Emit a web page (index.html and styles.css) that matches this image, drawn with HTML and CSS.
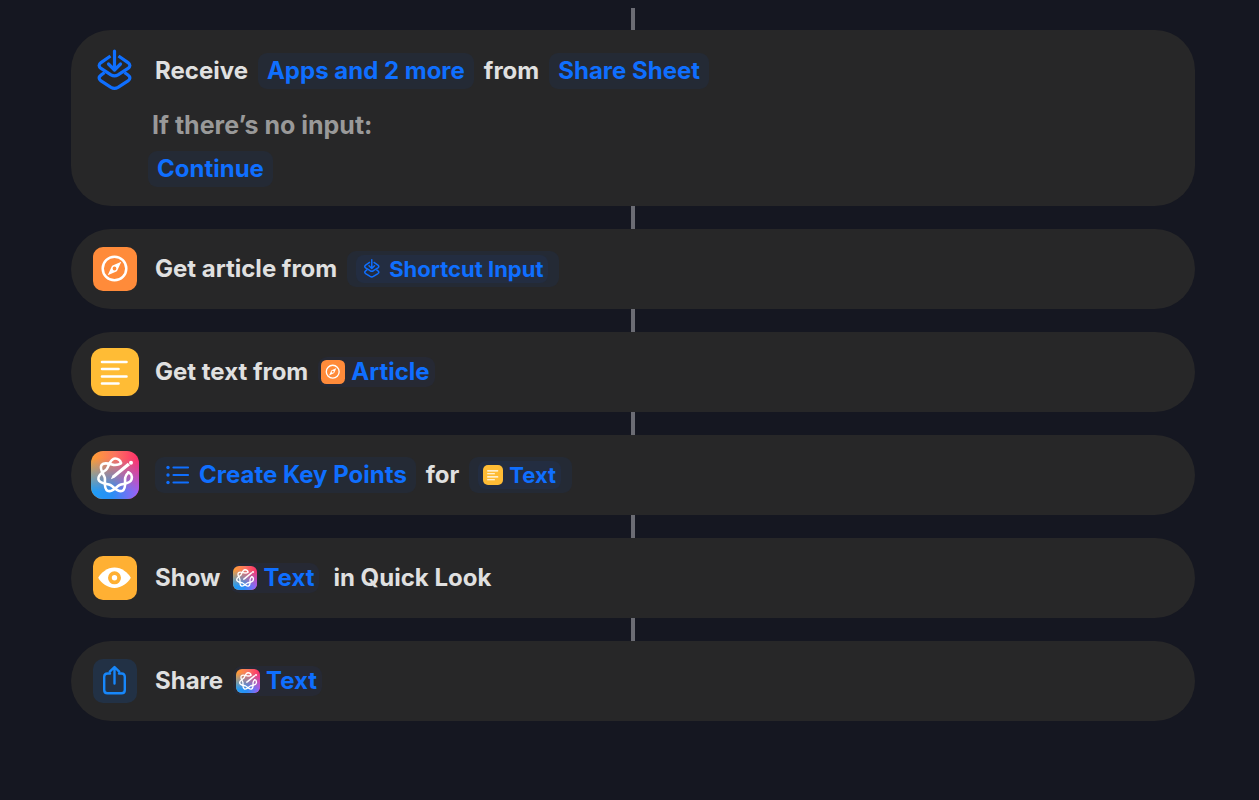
FILE: index.html
```
<!DOCTYPE html>
<html lang="en">
    <head>
        <title>Shortcut</title>
        <meta charset="UTF-8">
        <meta name="viewport" content="width=device-width, initial-scale=1">
        <link rel="stylesheet" href="styles.css">
    </head>
    <body>
        <!-- icons used more than once -->
        <svg class="defs" width="0" height="0" aria-hidden="true">
            <defs>
                <linearGradient id="warm" x1="0" y1="0" x2="1" y2="0">
                    <stop offset="0" stop-color="#ffa033"/>
                    <stop offset="0.5" stop-color="#fa7560"/>
                    <stop offset="1" stop-color="#ff2d6b"/>
                </linearGradient>
                <linearGradient id="cool" x1="0" y1="0" x2="1" y2="0">
                    <stop offset="0" stop-color="#1f9df5"/>
                    <stop offset="0.45" stop-color="#2b8ef5"/>
                    <stop offset="1" stop-color="#a060f5"/>
                </linearGradient>
                <linearGradient id="fade" x1="0" y1="0" x2="0" y2="1">
                    <stop offset="0.15" stop-color="#000"/>
                    <stop offset="0.85" stop-color="#fff"/>
                </linearGradient>
                <mask id="lower"><rect width="48" height="48" fill="url(#fade)"/></mask>
            </defs>
            <symbol id="input" viewBox="0 0 48 48">
                <g fill="none" stroke="currentColor" stroke-width="3.200" stroke-linecap="round" stroke-linejoin="round">
                    <path d="M23.500 4V22.500M17.500 17l6 6 6-6"/>
                    <path stroke-linecap="butt" d="M19.500 9L10 15.600Q6.200 18.500 10 21.400L20 27.800Q23.500 29.800 27 27.800L37 21.400Q40.800 18.500 37 15.600L27.500 9"/>
                    <path stroke-linecap="butt" d="M13.500 25.500L10 28.100Q6.200 31 10 33.900L20 40.300Q23.500 42.300 27 40.300L37 33.900Q40.800 31 37 28.100L33.500 25.500"/>
                </g>
            </symbol>
            <symbol id="safari" viewBox="0 0 44 44">
                <rect width="44" height="44" rx="10" fill="#ff8b3a"/>
                <circle cx="21.500" cy="21.500" r="11.800" fill="none" stroke="#fff" stroke-width="2.500"/>
                <path fill="#fff" fill-rule="evenodd" d="M28.300 14.700L24.300 23.500Q24 24.100 23.400 24.400L14.700 28.300L18.700 19.500Q19 18.900 19.600 18.600ZM21.500 19.600a1.900 1.900 0 1 0 0 3.800a1.900 1.900 0 1 0 0-3.800Z"/>
            </symbol>
            <symbol id="text" viewBox="0 0 48 48">
                <rect width="48" height="48" rx="12" fill="#ffbc35"/>
                <path d="M11 14h24.500M11 21h16.500M11 28.500h24.500M11 35.500h16.500" stroke="#fff" stroke-width="2.600" stroke-linecap="round"/>
            </symbol>
            <symbol id="writing" viewBox="0 0 48 48">
                <rect width="48" height="48" rx="12" fill="url(#warm)"/>
                <rect width="48" height="48" rx="12" fill="url(#cool)" mask="url(#lower)"/>
                <g fill="none" stroke="#fff" stroke-width="2.600" stroke-linecap="round">
                    <path d="M37.400 21.400Q35 23.400 34.200 26.800C33.400 30.200 35.900 37.600 31.400 39.800C26.900 42 22.600 35.500 19.400 34C16.200 32.500 8.500 33.200 7.400 28.300C6.300 23.400 13.600 20.700 15.800 18C18 15.300 19 7.500 24 7.500C27 7.500 29.500 9.500 30 12.100"/>
                    <path d="M37.400 21.400C39.500 22 41.500 24.500 40.600 28.300C39.500 33.200 31.800 32.500 28.600 34C25.400 35.500 21.100 42 16.600 39.800C12.100 37.600 14.600 30.200 13.800 26.800C13 23.400 7.600 17.800 10.700 13.900C13.800 10 20.500 14 24 14C26.500 14 29 13.500 30 12.100"/>
                </g>
                <path fill="#fff" d="M36.800 11.800L39 14.200L23.500 26.800L19.800 28.300L21.500 24.600Z"/>
                <circle cx="40" cy="11.800" r="2" fill="#fff"/>
            </symbol>
        </svg>

        <ol class="flow">
            <li class="action">
                <div class="row">
                    <span class="icon"><svg class="icon-48 blue" aria-hidden="true"><use href="#input"/></svg></span>
                    <span>Receive</span>
                    <button type="button" class="token">Apps and 2 more</button>
                    <span>from</span>
                    <button type="button" class="token">Share Sheet</button>
                </div>
                <div class="fallback">
                    <span class="hint" id="noinput">If there’s no input:</span>
                    <button type="button" class="token" aria-describedby="noinput">Continue</button>
                </div>
            </li>
            <li class="action">
                <div class="row">
                    <span class="icon"><svg class="icon-44" aria-hidden="true"><use href="#safari"/></svg></span>
                    <span>Get article from</span>
                    <button type="button" class="token nested">
                        <span class="variable"><svg class="icon-22" aria-hidden="true"><use href="#input"/></svg>Shortcut Input</span>
                    </button>
                </div>
            </li>
            <li class="action">
                <div class="row">
                    <span class="icon"><svg class="icon-48" aria-hidden="true"><use href="#text"/></svg></span>
                    <span>Get text from</span>
                    <button type="button" class="token inline"><svg class="icon-24" aria-hidden="true"><use href="#safari"/></svg>Article</button>
                </div>
            </li>
            <li class="action">
                <div class="row">
                    <span class="icon"><svg class="icon-48" aria-hidden="true"><use href="#writing"/></svg></span>
                    <button type="button" class="token list">
                        <svg class="icon-24" viewBox="0 0 24 24" aria-hidden="true">
                            <g fill="currentColor"><circle cx="2" cy="4.500" r="1.700"/><circle cx="2" cy="12" r="1.700"/><circle cx="2" cy="19.500" r="1.700"/></g>
                            <path d="M7.500 4.500H22M7.500 12H22M7.500 19.500H22" stroke="currentColor" stroke-width="2.200" stroke-linecap="round"/>
                        </svg>Create Key Points</button>
                    <span>for</span>
                    <button type="button" class="token nested">
                        <span class="variable"><svg class="icon-20" aria-hidden="true"><use href="#text"/></svg>Text</span>
                    </button>
                </div>
            </li>
            <li class="action">
                <div class="row">
                    <span class="icon">
                        <svg class="icon-44" viewBox="0 0 44 44" aria-hidden="true">
                            <rect width="44" height="44" rx="10" fill="#ffb033"/>
                            <path fill="#fff" d="M5.200 21.800C8 16.500 14.500 11.500 21.500 11.500S35 16.500 37.800 21.800C35 27.100 28.500 32 21.500 32S8 27.100 5.200 21.800Z"/>
                            <circle cx="21.500" cy="21.800" r="4.600" fill="none" stroke="#ffb033" stroke-width="3.800"/>
                        </svg>
                    </span>
                    <span>Show</span>
                    <button type="button" class="token inline"><svg class="icon-24" aria-hidden="true"><use href="#writing"/></svg>Text</button>
                    <span class="after">in Quick Look</span>
                </div>
            </li>
            <li class="action">
                <div class="row">
                    <span class="icon">
                        <svg class="icon-44" viewBox="0 0 44 44" aria-hidden="true">
                            <rect width="44" height="44" rx="10" fill="#223145"/>
                            <g fill="none" stroke="#1787fb" stroke-width="2.400" stroke-linecap="round" stroke-linejoin="round">
                                <path d="M17 14.500H14.500Q11.200 14.500 11.200 17.800V31Q11.200 34.300 14.500 34.300H28.500Q31.800 34.300 31.800 31V17.800Q31.800 14.500 28.500 14.500H26"/>
                                <path d="M21.500 24.500V8.500M16.800 12.700L21.500 8L26.200 12.700"/>
                            </g>
                        </svg>
                    </span>
                    <span>Share</span>
                    <button type="button" class="token inline"><svg class="icon-24" aria-hidden="true"><use href="#writing"/></svg>Text</button>
                </div>
            </li>
        </ol>
    </body>
</html>
```
FILE: styles.css
```
body{
    margin: 0;
    background: #151721;
    color: #e0e0e0;
    font-family: Inter, "Liberation Sans", sans-serif;
    font-size: 24px;
    font-weight: 700;
    line-height: 36px;
}
.defs{
    position: absolute;
}
.flow{
    list-style: none;
    margin: 0;
    padding: 8px 64px 64px 71px;
}
/* the line that joins an action to the one above */
.action::before{
    content: "";
    display: block;
    width: 4px;
    height: 23px;
    margin: 0 auto;
    background: #6b6c74;
}
.action:first-child::before{
    height: 22px;
}
.row{
    display: flex;
    flex-wrap: wrap;
    align-items: center;
    gap: 10px;
    padding: 16px 20px;
    background: #272728;
    border-radius: 40px;
}
.action:first-child .row{
    border-radius: 40px 40px 0 0;
    padding: 17px 20px 12px;
}
.fallback{
    display: flex;
    flex-direction: column;
    align-items: flex-start;
    gap: 8px;
    padding: 0 20px 19px 77px;
    background: #272728;
    border-radius: 0 0 40px 40px;
}
.hint{
    padding-left: 4px;
    color: #999;
    font-size: 25px;
}
.icon{
    display: flex;
    align-items: center;
    justify-content: center;
    width: 48px;
    height: 48px;
    margin-right: 6px;
}
svg{
    flex: none;
}
.icon-48{
    width: 48px;
    height: 48px;
}
.icon-44{
    width: 44px;
    height: 44px;
}
.icon-24{
    width: 24px;
    height: 24px;
}
.icon-22{
    width: 22px;
    height: 22px;
}
.icon-20{
    width: 20px;
    height: 20px;
}
.blue, .token{
    color: #0f6fff;
}
.token{
    display: flex;
    align-items: center;
    height: 36px;
    margin: 0;
    padding: 0 9px;
    border: 0;
    border-radius: 9px;
    background: #242a35;
    font: inherit;
    cursor: pointer;
}
.nested{
    padding: 0 11px 0 9px;
}
.variable{
    display: flex;
    align-items: center;
    gap: 6px;
    padding: 0 5px;
    border-radius: 8px;
    background: #232d41;
    font-size: 22px;
    line-height: 28px;
}
.inline{
    height: 30px;
    gap: 6px;
    padding: 0 5px 0 3px;
    background: #262934;
}
.list{
    gap: 9px;
    padding-left: 11px;
}
.after{
    margin-left: 4px;
}
```
